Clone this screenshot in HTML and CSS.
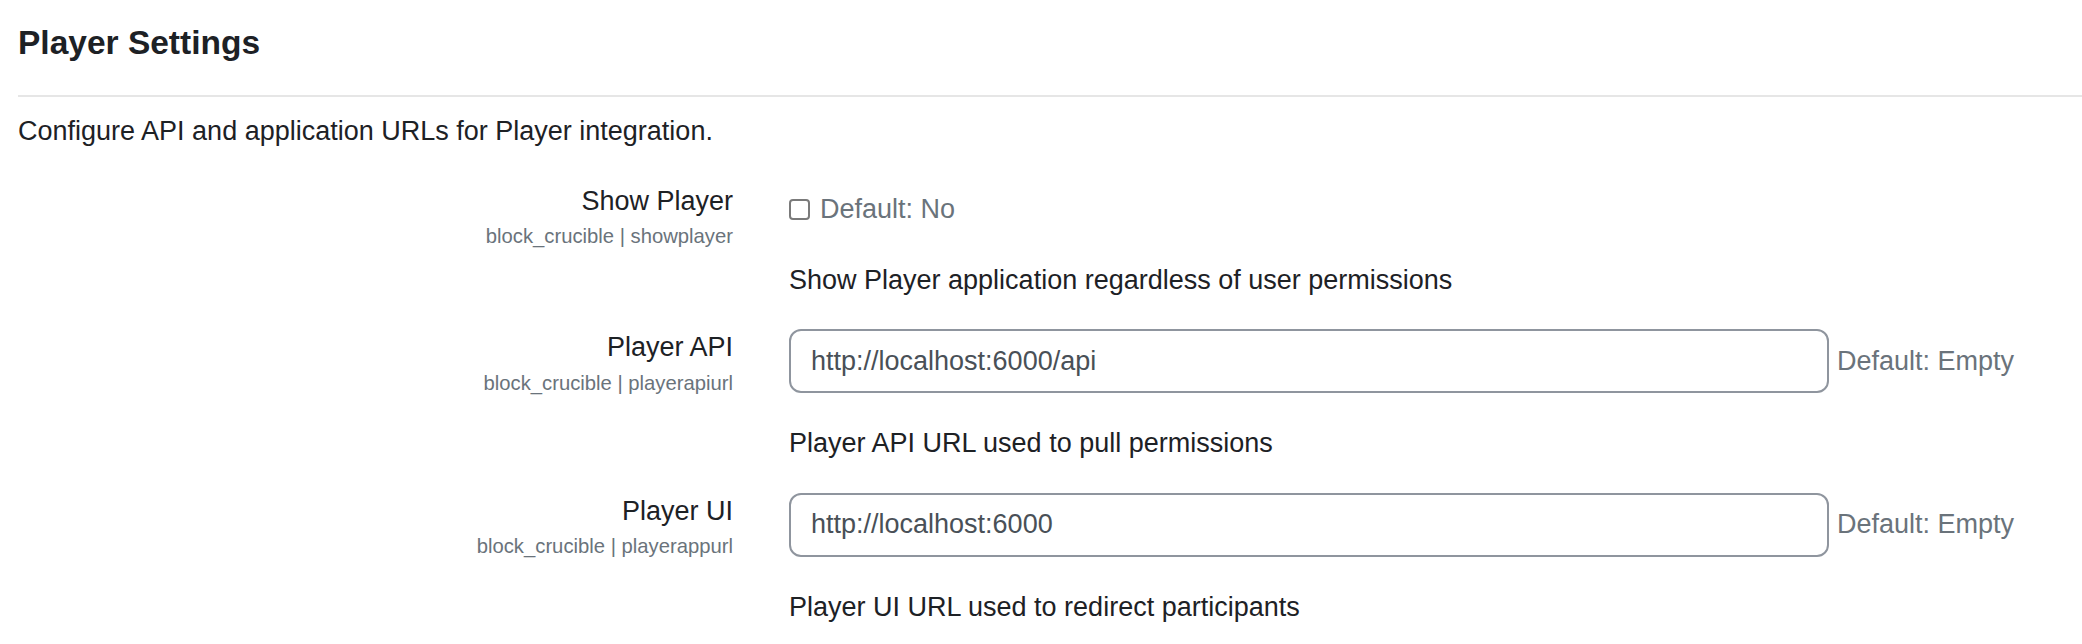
FILE: index.html
```html
<!DOCTYPE html>
<html lang="en">
<head>
<meta charset="utf-8">
<title>Player Settings</title>
<link rel="stylesheet" href="styles.css">
</head>
<body>
<div class="page">
  <h2 class="heading">Player Settings</h2>
  <div class="divider"></div>
  <p class="intro">Configure API and application URLs for Player integration.</p>

  <div class="setting">
    <div class="label-col">
      <label class="label">Show Player</label>
      <span class="shortname">block_crucible | showplayer</span>
    </div>
    <div class="field-col">
      <div class="control-line checkbox-line">
        <span class="checkbox"></span>
        <span class="default">Default: No</span>
      </div>
      <p class="desc">Show Player application regardless of user permissions</p>
    </div>
  </div>

  <div class="setting">
    <div class="label-col">
      <label class="label">Player API</label>
      <span class="shortname">block_crucible | playerapiurl</span>
    </div>
    <div class="field-col">
      <div class="control-line input-line">
        <input class="text-input" type="text" value="http://localhost:6000/api">
        <span class="default">Default: Empty</span>
      </div>
      <p class="desc">Player API URL used to pull permissions</p>
    </div>
  </div>

  <div class="setting">
    <div class="label-col">
      <label class="label">Player UI</label>
      <span class="shortname">block_crucible | playerappurl</span>
    </div>
    <div class="field-col">
      <div class="control-line input-line">
        <input class="text-input" type="text" value="http://localhost:6000">
        <span class="default">Default: Empty</span>
      </div>
      <p class="desc">Player UI URL used to redirect participants</p>
    </div>
  </div>
</div>
</body>
</html>
```
FILE: styles.css
```css
* { box-sizing: border-box; }

html, body {
  margin: 0;
  padding: 0;
  background: #ffffff;
}

body {
  font-family: "Liberation Sans", Arial, sans-serif;
  font-size: 27px;
  line-height: 1.5;
  color: #1d2125;
  overflow: hidden;
}

.page {
  padding: 23px 0 0 18px;
}

.heading {
  margin: 0;
  font-size: 33.5px;
  line-height: 1.2;
  font-weight: 700;
  color: #1d2125;
}

.divider {
  margin-top: 32px;
  height: 2px;
  background: #e6e6e6;
}

.intro {
  margin: 14px 0 0;
}

.setting {
  display: grid;
  grid-template-columns: 715px 1fr;
  column-gap: 56px;
  margin-top: 27px;
}

.intro + .setting {
  margin-top: 29px;
}

.label-col {
  display: flex;
  flex-direction: column;
  align-items: flex-end;
  text-align: right;
}

.label {
  color: #1d2125;
}

.shortname {
  font-size: 20.25px;
  line-height: 1.5;
  color: #6a737b;
}

.control-line {
  display: flex;
  align-items: center;
}

.checkbox-line {
  margin-top: 9px;
  height: 40px;
  gap: 10px;
}

.input-line {
  margin-top: 2px;
  gap: 8px;
}

.checkbox {
  width: 21px;
  height: 21px;
  border: 2px solid #7a7a7a;
  border-radius: 4px;
  background: #ffffff;
  flex: none;
}

.default {
  color: #6a737b;
}

.text-input {
  width: 1040px;
  height: 64px;
  padding: 0 20px;
  border: 2px solid #8f959e;
  border-radius: 12px;
  font-family: inherit;
  font-size: 27px;
  color: #495057;
  background: #ffffff;
  outline: none;
}

.desc {
  margin: 30px 0 0;
}
```
